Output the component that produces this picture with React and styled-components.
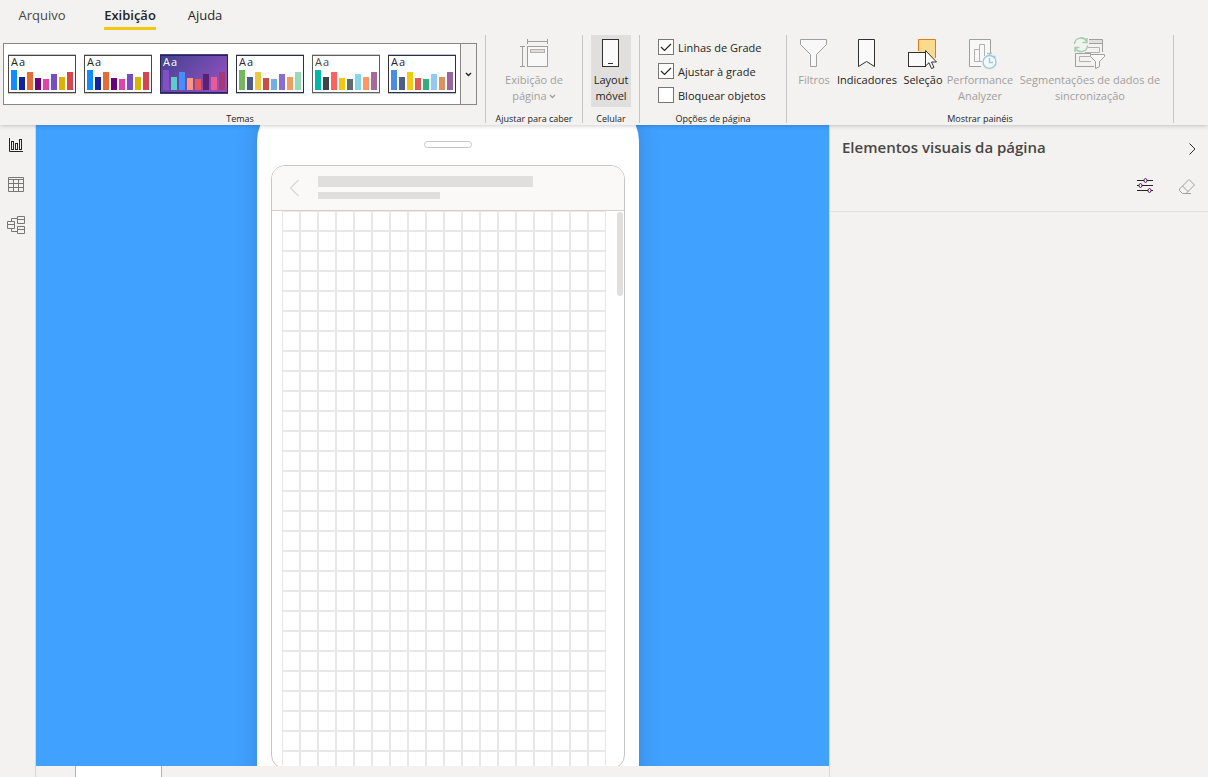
import React from "react";
import styled, { createGlobalStyle } from "styled-components";

const GlobalStyle = createGlobalStyle`
  * { box-sizing: border-box; }
  body {
    margin: 0;
    background: #f3f2f1;
    color: #252423;
    font-family: "Open Sans", "Noto Sans", sans-serif;
    font-size: 11px;
    line-height: 16px;
  }
  button { margin: 0; padding: 0; border: 0; background: none; color: inherit; font: inherit; }
  svg { display: block; fill: none; }
`;

const Page = styled.div`
  display: flex;
  flex-direction: column;
  height: 100vh;
  overflow: hidden;
`;

const Header = styled.header`
  position: relative;
  z-index: 1;
  flex: none;
  height: 125px;
  background: #f3f2f1;
  box-shadow: 0 1px 4px rgba(0, 0, 0, 0.2);
`;

const Tabs = styled.nav`
  display: flex;
  gap: 31px;
  height: 35px;
  padding-left: 18px;
`;

const Tab = styled.button`
  height: 30px;
  width: ${(p) => p.$width}px;
  margin-right: ${(p) => (p.$file ? 7 : 0)}px;
  padding-top: 4px;
  border-bottom: 3px solid ${(p) => (p.$active ? "#f2c811" : "transparent")};
  color: ${(p) => (p.$file ? "#484644" : "#252423")};
  font-size: 13px;
  font-weight: ${(p) => (p.$active ? 600 : 400)};
  line-height: 23px;
  white-space: nowrap;
`;

const Ribbon = styled.div`
  display: flex;
  height: 90px;
`;

const Group = styled.section`
  display: flex;
  flex: none;
  flex-direction: column;
  align-items: center;
  width: ${(p) => p.$width}px;
  height: 88px;
  padding: ${(p) => (p.$flush ? "0 8px 0 3px" : "0")};
  border-right: 1px solid #c8c6c4;
`;

const GroupBody = styled.div`
  display: flex;
  flex: none;
  gap: 1px;
  height: 78px;
`;

const GroupLabel = styled.div`
  flex: none;
  font-size: 9px;
  line-height: 12px;
  white-space: nowrap;
`;

const Gallery = styled.div`
  display: flex;
  width: 474px;
  height: 62px;
  margin-top: 8px;
  border: 1px solid #8a8886;
  background: #fff;
`;

const Themes = styled.div`
  display: flex;
  gap: 6px;
  align-items: center;
  padding: 0 3px;
`;

const ThemeButton = styled.button`
  width: 70px;
  height: 40px;
`;

const MoreThemes = styled.button`
  display: grid;
  flex: 1;
  place-items: center;
  border-left: 1px solid #8a8886;
  background: #f3f2f1;
`;

const ToolButton = styled.button`
  display: flex;
  flex-direction: column;
  align-items: center;
  width: ${(p) => p.$width}px;
  height: 72px;
  padding-top: 2px;
  background: ${(p) => (p.$pressed ? "#e1dfdd" : "transparent")};
  color: ${(p) => (p.$muted ? "#a19f9d" : "#252423")};
  white-space: nowrap;
  svg { flex: none; }
`;

const ToolText = styled.span`
  display: flex;
  gap: 2px;
  align-items: center;
`;

const Options = styled.div`
  display: flex;
  flex-direction: column;
  gap: 8px;
  width: 110px;
  padding-top: 4px;
`;

const Option = styled.label`
  display: grid;
  grid-template-columns: 16px auto;
  column-gap: 4px;
  justify-content: start;
  height: 16px;
  line-height: 18px;
  white-space: nowrap;
  svg { grid-area: 1 / 1; pointer-events: none; }
  span { grid-area: 1 / 2; }
`;

const Check = styled.input`
  grid-area: 1 / 1;
  width: 16px;
  height: 16px;
  margin: 0;
  border: 1px solid #797775;
  background: #fff;
  appearance: none;
  & + svg { visibility: hidden; z-index: 1; }
  &:checked + svg { visibility: visible; }
`;

const Body = styled.div`
  display: flex;
  flex: 1;
  min-height: 0;
`;

const Sidebar = styled.nav`
  display: flex;
  flex: none;
  flex-direction: column;
  gap: 20px;
  width: 36px;
  padding: 10px 0 0 6px;
  border-right: 1px solid #d8d6d4;
`;

const ViewButton = styled.button`
  width: 20px;
  height: 20px;
  color: ${(p) => (p.$active ? "#252423" : "#797775")};
`;

const Workspace = styled.main`
  display: flex;
  flex: 1;
  flex-direction: column;
  min-width: 0;
`;

const Canvas = styled.div`
  display: flex;
  flex: 1;
  justify-content: center;
  align-items: flex-start;
  min-height: 0;
  padding-left: 31px;
  overflow: hidden;
  background: #41a1ff;
`;

const Phone = styled.div`
  display: flex;
  flex: none;
  flex-direction: column;
  align-items: center;
  width: 382px;
  height: calc(100% + 80px);
  margin-top: -24px;
  padding-top: 40px;
  border-radius: 40px;
  background: #fff;
  box-shadow: 0 0 22px rgba(0, 0, 0, 0.16);
`;

const Speaker = styled.div`
  flex: none;
  width: 48px;
  height: 7px;
  border: 1px solid #c8c6c4;
  border-radius: 4px;
`;

const Screen = styled.div`
  display: flex;
  flex-direction: column;
  width: 354px;
  height: calc(100% - 77px);
  margin-top: 17px;
  border: 1px solid #c8c6c4;
  border-radius: 14px;
  overflow: hidden;
`;

const ScreenHeader = styled.div`
  display: flex;
  flex: none;
  gap: 16px;
  height: 45px;
  padding: 10px 16px 0;
  border-bottom: 1px solid #d2d0ce;
  background: #faf9f8;
`;

const Placeholders = styled.div`
  display: flex;
  flex-direction: column;
  gap: 5px;
`;

const Placeholder = styled.div`
  width: ${(p) => p.$width}px;
  height: ${(p) => p.$height}px;
  background: #e1dfdd;
`;

const ScreenBody = styled.div`
  display: flex;
  flex: 1;
  justify-content: space-between;
  min-height: 0;
  padding: 0 1px 0 10px;
`;

const Grid = styled.div`
  width: 324px;
  background-image:
    linear-gradient(to right, #e8e8e8 1px, transparent 1px 17px, #e8e8e8 17px),
    linear-gradient(to bottom, #e8e8e8 1px, transparent 1px 19px, #e8e8e8 19px);
  background-size: 18px 20px;
`;

const ScrollThumb = styled.div`
  width: 6px;
  height: 84px;
  margin-top: 1px;
  border-radius: 3px;
  background: #e1dfdd;
`;

const PageStrip = styled.div`
  flex: none;
  height: 11px;
  padding-left: 39px;
`;

const PageTab = styled.div`
  width: 87px;
  height: 100%;
  border: solid #b3b0ad;
  border-width: 0 1px;
  background: #fff;
`;

const Pane = styled.aside`
  flex: none;
  width: 379px;
  border-left: 1px solid #dcdad8;
`;

const PaneHeader = styled.div`
  display: flex;
  flex-direction: column;
  gap: 20px;
  height: 87px;
  padding: 12px 12px 0;
  border-bottom: 1px solid #e1dfdd;
`;

const PaneRow = styled.div`
  display: flex;
  gap: 24px;
  align-items: center;
  justify-content: ${(p) => (p.$end ? "flex-end" : "space-between")};
`;

const PaneTitle = styled.h2`
  margin: 0;
  color: #484644;
  font-size: 15px;
  font-weight: 600;
  line-height: 20px;
`;

const BAR_TOPS = [16, 23, 18, 24, 25, 20, 23, 18];

const THEMES = [
  { name: "Padrão", border: "#484644", text: "#252423", bars: ["#118dff", "#12239e", "#e66c37", "#6b007b", "#e044a7", "#744ec2", "#d9b300", "#d64550"] },
  { name: "Clássico", border: "#484644", text: "#252423", bars: ["#118dff", "#12239e", "#e66c37", "#6b007b", "#e044a7", "#744ec2", "#d9b300", "#d64550"] },
  { name: "Inovar", border: "#2b2350", text: "#fff", dark: true, bars: ["#8250c4", "#5ecbc8", "#438fff", "#ff977e", "#eb5757", "#5b2071", "#ec5a96", "#a43b76"] },
  { name: "Florescer", border: "#2c3046", text: "#252440", bars: ["#74b761", "#4c5a88", "#ebc844", "#cb4d48", "#71afe2", "#8c6bd1", "#ee9e64", "#95dabb"] },
  { name: "Solar", border: "#605e5c", text: "#484644", bars: ["#01b8aa", "#374649", "#fd625e", "#f2c80f", "#5f6b6d", "#8ad4eb", "#fe9666", "#a66999"] },
  { name: "Maré", border: "#2b3148", text: "#202440", bars: ["#4a8ddc", "#4c5d8a", "#f3c911", "#dc5b57", "#33ae81", "#95c8f0", "#dd915f", "#9a64a0"] },
];

function ThemeThumb({ theme }) {
  return (
    <svg width="70" height="40" viewBox="0 0 70 40" aria-hidden="true">
      <defs>
        <linearGradient id="duskTheme" x1="0" y1="0" x2="1" y2="0.6">
          <stop offset="0" stopColor="#3f4290" />
          <stop offset="1" stopColor="#8f50bd" />
        </linearGradient>
      </defs>
      <rect x="1" y="0" width="68" height="40" fill={theme.dark ? "#4a3d85" : theme.border} opacity={theme.dark ? 1 : 0.3} />
      <rect x="1.5" y="1.5" width="67" height="37" fill={theme.dark ? "url(#duskTheme)" : "#fff"} stroke={theme.border} />
      <text x="4" y="12" fontSize="11" fill={theme.text} letterSpacing="1">Aa</text>
      {theme.bars.map((color, i) => (
        <rect key={i} x={4 + i * 8} y={BAR_TOPS[i]} width="6" height={36 - BAR_TOPS[i]} fill={color} />
      ))}
    </svg>
  );
}

function ToolIcon({ color = "#a19f9d", children }) {
  return (
    <svg width="36" height="35" viewBox="0 0 36 35" stroke={color} aria-hidden="true">
      {children}
    </svg>
  );
}

function SmallChevron() {
  return (
    <svg width="7" height="5" viewBox="0 0 7 5" stroke="currentColor" strokeWidth="1.4" aria-hidden="true">
      <path d="M1 1L3.5 3.5L6 1" />
    </svg>
  );
}

function Tool({ width, icon, lines, muted, pressed, menu }) {
  return (
    <ToolButton $width={width} $muted={muted} $pressed={pressed}>
      {icon}
      {lines.map((line, i) => (
        <ToolText key={line}>
          {line}
          {menu && i === lines.length - 1 && <SmallChevron />}
        </ToolText>
      ))}
    </ToolButton>
  );
}

const pageViewIcon = (
  <ToolIcon>
    <path d="M11.5 2V7M31.5 2V7M11.5 4.5H31.5M4 9.5H9M4 29.5H9M6.5 9.5V29.5" />
    <rect x="11.5" y="9.5" width="20" height="20" fill="#f8f8f8" />
    <rect x="14.5" y="12.5" width="14" height="3" fill="#e1dfdd" stroke="#b3b0ad" />
  </ToolIcon>
);

const mobileIcon = (
  <ToolIcon color="#323130">
    <rect x="9.5" y="2.5" width="16" height="27" fill="#fafafa" />
    <path d="M15 26.5H20" />
  </ToolIcon>
);

const filterIcon = (
  <ToolIcon>
    <path fill="#f8f8f8" d="M4.5 2.5H30.5V7.5L20.5 17.5V29.5H14.5V17.5L4.5 7.5Z" />
  </ToolIcon>
);

const bookmarkIcon = (
  <ToolIcon color="#323130">
    <path fill="#fafafa" d="M9.5 2.5H25.5V29.5L17.5 24.5L9.5 29.5Z" />
  </ToolIcon>
);

const selectionIcon = (
  <ToolIcon color="#323130">
    <path d="M14 15L30 22V3H14Z" fill="#f8db8f" stroke="none" />
    <path d="M13.5 14V2.5H30.5V21" stroke="#e07b16" />
    <rect x="3.5" y="15.5" width="17" height="14" fill="#fafafa" />
    <path fill="#fff" d="M20.5 13.5V29L24 25.7L26.5 31.5L29 30.5L26.5 25H31.5Z" />
  </ToolIcon>
);

const performanceIcon = (
  <ToolIcon>
    <path fill="#f8f8f8" d="M19 29.5H7.5V2.5H28.5V17" />
    <path d="M20 24.5H12.5V12.5H17.5V24.5M17.5 12.5V7.5H22.5V19" stroke="#b3b0ad" />
    <circle cx="27.5" cy="25" r="6.5" fill="#f3f8fb" stroke="#9fc9e3" strokeWidth="1.4" />
    <path d="M27.5 21V25.5H31M27.5 18.5V16.5M25 16.5H30M32 19L33.5 20.5" stroke="#9fc9e3" strokeWidth="1.4" />
  </ToolIcon>
);

const syncIcon = (
  <ToolIcon>
    <path d="M17 2.5H30.5V6.5H17" fill="#e1dfdd" />
    <path d="M30.5 6V15M3.5 16V29.5H22M3.5 16.5H19" />
    <path d="M16 10.5H27.5V15.5H13M19 24.5H7.5V19.5H19" stroke="#b3b0ad" />
    <path fill="#f8f8f8" d="M18.5 17.5H32.5V19.5L27.5 24.5V29.5L23.5 31.5V24.5L18.5 19.5Z" />
    <path d="M2.5 7A6.5 6.5 0 0 1 14.5 4M15 1V5.5H10.5M15.5 8.5A6.5 6.5 0 0 1 3.5 11.5M3 15V10.5H7.5" stroke="#a2cfab" strokeWidth="1.5" />
  </ToolIcon>
);

function CheckOption({ label, checked }) {
  return (
    <Option>
      <Check type="checkbox" defaultChecked={checked} />
      <svg width="16" height="16" viewBox="0 0 16 16" stroke="#252423" strokeWidth="1.2" aria-hidden="true">
        <path d="M3 8L6.5 11.5L13 5" />
      </svg>
      <span>{label}</span>
    </Option>
  );
}

function RibbonGroup({ width, label, flush, children }) {
  return (
    <Group $width={width} $flush={flush} aria-label={label}>
      <GroupBody>{children}</GroupBody>
      <GroupLabel>{label}</GroupLabel>
    </Group>
  );
}

function TopBar() {
  return (
    <Header>
      <Tabs>
        <Tab $file $width={48}>Arquivo</Tab>
        <Tab $active $width={52}>Exibição</Tab>
        <Tab $width={36}>Ajuda</Tab>
      </Tabs>
      <Ribbon>
        <RibbonGroup width={486} label="Temas" flush>
          <Gallery>
            <Themes>
              {THEMES.map((theme) => (
                <ThemeButton key={theme.name} aria-label={theme.name}>
                  <ThemeThumb theme={theme} />
                </ThemeButton>
              ))}
            </Themes>
            <MoreThemes aria-label="Mais temas">
              <SmallChevron />
            </MoreThemes>
          </Gallery>
        </RibbonGroup>
        <RibbonGroup width={97} label="Ajustar para caber">
          <Tool width={72} muted menu icon={pageViewIcon} lines={["Exibição de", "página"]} />
        </RibbonGroup>
        <RibbonGroup width={57} label="Celular">
          <Tool width={40} pressed icon={mobileIcon} lines={["Layout", "móvel"]} />
        </RibbonGroup>
        <RibbonGroup width={147} label="Opções de página">
          <Options>
            <CheckOption label="Linhas de Grade" checked />
            <CheckOption label="Ajustar à grade" checked />
            <CheckOption label="Bloquear objetos" />
          </Options>
        </RibbonGroup>
        <RibbonGroup width={387} label="Mostrar painéis">
          <Tool width={38} muted icon={filterIcon} lines={["Filtros"]} />
          <Tool width={66} icon={bookmarkIcon} lines={["Indicadores"]} />
          <Tool width={44} icon={selectionIcon} lines={["Seleção"]} />
          <Tool width={68} muted icon={performanceIcon} lines={["Performance", "Analyzer"]} />
          <Tool width={150} muted icon={syncIcon} lines={["Segmentações de dados de", "sincronização"]} />
        </RibbonGroup>
      </Ribbon>
    </Header>
  );
}

function ViewIcon({ children }) {
  return (
    <svg width="20" height="20" viewBox="0 0 20 20" stroke="currentColor" aria-hidden="true">
      {children}
    </svg>
  );
}

function ViewSwitcher() {
  return (
    <Sidebar>
      <ViewButton $active aria-label="Relatório">
        <ViewIcon>
          <path d="M3.5 3V16.5H17" />
          <rect x="5.5" y="6.5" width="2" height="8" />
          <rect x="9.5" y="8.5" width="2" height="6" />
          <rect x="13.5" y="4.5" width="2" height="10" />
        </ViewIcon>
      </ViewButton>
      <ViewButton aria-label="Dados">
        <ViewIcon>
          <path d="M2.5 2.5H17.5V16.5H2.5ZM2.5 4.5H17.5M2.5 8.5H17.5M2.5 12.5H17.5M7.5 4.5V16.5M12.5 4.5V16.5" />
        </ViewIcon>
      </ViewButton>
      <ViewButton aria-label="Modelo">
        <ViewIcon>
          <path d="M1.5 6.5H8.5V13.5H1.5ZM1.5 9.5H8.5M11.5 1.5H18.5V8.5H11.5ZM11.5 4.5H18.5M11.5 11.5H18.5V18.5H11.5ZM11.5 14.5H18.5M5.5 6.5V3.5H11.5M5.5 13.5V16.5H11.5" />
        </ViewIcon>
      </ViewButton>
    </Sidebar>
  );
}

function PhonePreview() {
  return (
    <Phone>
      <Speaker />
      <Screen>
        <ScreenHeader>
          <svg width="14" height="24" viewBox="0 0 14 24" stroke="#dcdad8" strokeWidth="1.4" aria-hidden="true">
            <path d="M10.5 4L2.5 12L10.5 20" />
          </svg>
          <Placeholders>
            <Placeholder $width={215} $height={11} />
            <Placeholder $width={122} $height={7} />
          </Placeholders>
        </ScreenHeader>
        <ScreenBody>
          <Grid />
          <ScrollThumb />
        </ScreenBody>
      </Screen>
    </Phone>
  );
}

function VisualsPane() {
  return (
    <Pane>
      <PaneHeader>
        <PaneRow>
          <PaneTitle>Elementos visuais da página</PaneTitle>
          <button aria-label="Recolher">
            <svg width="8" height="16" viewBox="0 0 8 16" stroke="#323130" aria-hidden="true">
              <path d="M1.5 4.5L7 10L1.5 15.5" />
            </svg>
          </button>
        </PaneRow>
        <PaneRow $end>
          <button aria-label="Formatar">
            <svg width="18" height="18" viewBox="0 0 18 18" stroke="#252423" aria-hidden="true">
              <path d="M1 3.5H17M1 8.5H17M1 13.5H17" strokeWidth="1.2" />
              <g fill="#f3f2f1" stroke="#5c1f63">
                <ellipse cx="9.5" cy="3.5" rx="1.5" ry="2" />
                <ellipse cx="4.5" cy="8.5" rx="1.5" ry="2" />
                <ellipse cx="13.5" cy="13.5" rx="1.5" ry="2" />
              </g>
            </svg>
          </button>
          <button aria-label="Limpar">
            <svg width="18" height="18" viewBox="0 0 18 18" stroke="#a19f9d" aria-hidden="true">
              <path d="M11 2.5L16.5 8L8 16.5H4.5L1.5 13.5V12ZM4.5 9L10 14.5M8 16.5H13" />
            </svg>
          </button>
        </PaneRow>
      </PaneHeader>
    </Pane>
  );
}

export default function App() {
  return (
    <Page>
      <GlobalStyle />
      <TopBar />
      <Body>
        <ViewSwitcher />
        <Workspace>
          <Canvas>
            <PhonePreview />
          </Canvas>
          <PageStrip>
            <PageTab />
          </PageStrip>
        </Workspace>
        <VisualsPane />
      </Body>
    </Page>
  );
}
